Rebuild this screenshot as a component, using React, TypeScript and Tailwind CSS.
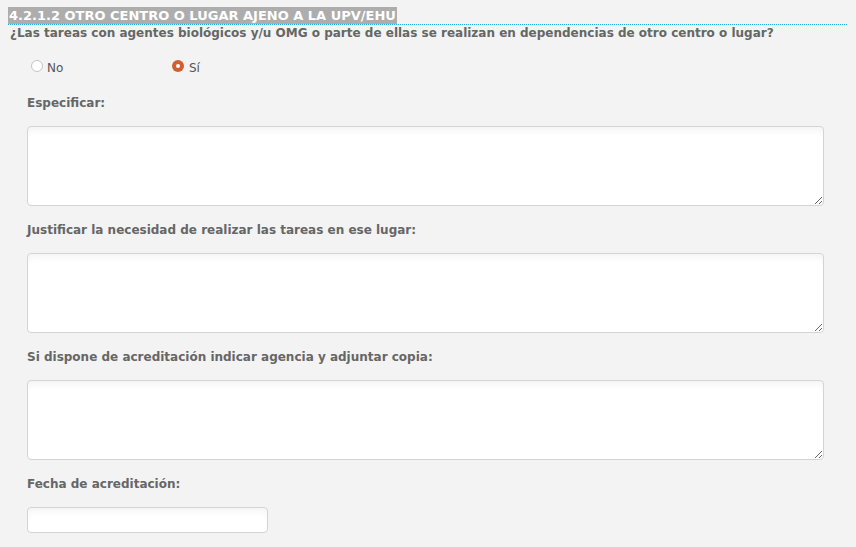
import { useState } from 'react'

const font = { fontFamily: '"DejaVu Sans", Verdana, sans-serif' }

function Field({ label, children }: { label: string; children: React.ReactNode }) {
  return (
    <div className="pl-[27px] pr-[32px]">
      <div className="h-[21px] pt-[4px] text-[12px] font-bold leading-[14px] text-[#666]">{label}</div>
      <div className="mt-[13px]">{children}</div>
    </div>
  )
}

function Area() {
  return (
    <textarea
      className="block h-[80px] w-full resize-y rounded-[4px] border border-[#d4d4d4] bg-white shadow-[inset_0_6px_8px_-4px_rgba(0,0,0,0.06)] outline-none"
    />
  )
}

export default function App() {
  const [val, setVal] = useState('si')
  return (
    <div className="min-h-[547px] w-[856px] bg-[#f3f3f3] pt-[7px]" style={font}>
      <div className="mx-[8px] flex">
        <span className="bg-[#adadad] px-[1px] text-[13px] font-bold leading-[17px] text-white">
          4.2.1.2 OTRO CENTRO O LUGAR AJENO A LA UPV/EHU
        </span>
      </div>
      <div className="mx-[8px] h-[1px] bg-[repeating-linear-gradient(90deg,#1fa9dd_0_1px,transparent_1px_2px)]" />
      <div className="px-[10px] text-[12px] font-bold leading-[16px] text-[#666]">
        ¿Las tareas con agentes biológicos y/u OMG o parte de ellas se realizan en dependencias de otro centro o lugar?
      </div>

      <div className="mt-[15px] flex h-[20px] items-center text-[12px] text-[#555]">
        <label className="ml-[31px] flex w-[141px] items-center gap-[4px]" onClick={() => setVal('no')}>
          <span
            className={`inline-block h-[12px] w-[12px] rounded-full border ${
              val === 'no' ? 'border-[#c85a2e] bg-[#d9683a]' : 'border-[#c4c4c4] bg-white'
            }`}
          />
          <span className="pt-[3px]">No</span>
        </label>
        <label className="flex items-center gap-[5px]" onClick={() => setVal('si')}>
          <span
            className={`flex h-[12px] w-[12px] items-center justify-center rounded-full ${
              val === 'si' ? 'bg-[#d35f30]' : 'border border-[#c4c4c4] bg-white'
            }`}
          >
            {val === 'si' && <span className="h-[4px] w-[4px] rounded-full bg-white" />}
          </span>
          <span className="pt-[3px]">Sí</span>
        </label>
      </div>

      <div className="mt-[16px] flex flex-col gap-[13px]">
        <Field label="Especificar:">
          <Area />
        </Field>
        <Field label="Justificar la necesidad de realizar las tareas en ese lugar:">
          <Area />
        </Field>
        <Field label="Si dispone de acreditación indicar agencia y adjuntar copia:">
          <Area />
        </Field>
        <Field label="Fecha de acreditación:">
          <input className="block h-[26px] w-[241px] rounded-[4px] border border-[#d4d4d4] bg-white shadow-[inset_0_6px_8px_-4px_rgba(0,0,0,0.06)] outline-none" />
        </Field>
      </div>
    </div>
  )
}
